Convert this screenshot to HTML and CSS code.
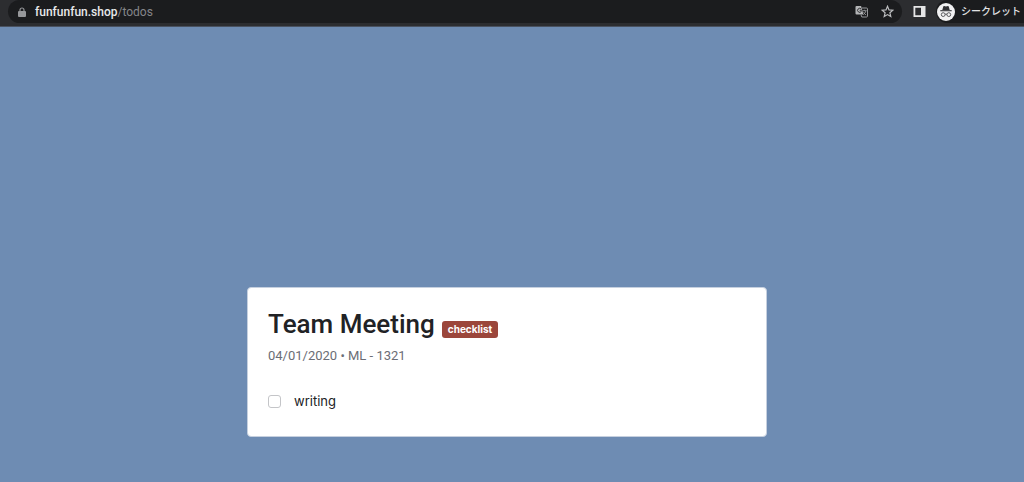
FILE: index.html
```html
<!DOCTYPE html>
<html lang="ja">
<head>
<meta charset="utf-8">
<title>Todos</title>
<link rel="stylesheet" href="styles.css">
</head>
<body>
<header class="toolbar">
  <div class="omnibox">
    <svg class="lock" viewBox="0 0 8 10" aria-hidden="true"><rect y="4" width="8" height="6" rx="1" fill="currentColor"/><path d="M2 4.5V3a2 2 0 0 1 4 0v1.5" fill="none" stroke="currentColor" stroke-width="1.2"/></svg>
    <a class="url" href="#"><span class="host">funfunfun.shop</span><span class="path">/todos</span></a>
    <button class="icon-button" type="button" aria-label="翻訳">
      <svg class="icon" viewBox="0 0 13 13" aria-hidden="true">
        <path d="M1.500 1h4.600l2.300 8.600H1.500a1 1 0 0 1-1-1V2a1 1 0 0 1 1-1z" fill="#b4b5b7"/>
        <path d="M6.200 4.100A2 2 0 1 0 6.300 6.400V5.300H4.700" fill="none" stroke="#303134" stroke-width="1"/>
        <path d="M7 3h4.500a1 1 0 0 1 1 1v7a1 1 0 0 1-1 1H6.800L6 9.800" fill="none" stroke="#96979a" stroke-width="1"/>
        <path d="M7.500 5.700h4M9.500 4.800v.9M11 5.700c-.4 1.800-1.400 3-2.700 4M8.600 7.200c.5 1.200 1.300 2.100 2.500 2.800" fill="none" stroke="#96979a" stroke-width=".9"/>
      </svg>
    </button>
    <button class="icon-button" type="button" aria-label="ブックマーク">
      <svg class="icon" viewBox="0 0 13 13" aria-hidden="true"><path d="M6.500 1.300l1.500 3.600 3.900.3-3 2.600.9 3.800-3.300-2-3.300 2 .9-3.800-3-2.600 3.900-.3z" fill="none" stroke="#bdbec0" stroke-width="1.200" stroke-linejoin="miter"/></svg>
    </button>
  </div>
  <button class="icon-button panel-button" type="button" aria-label="サイドパネル">
    <svg class="icon" viewBox="0 0 13 13" aria-hidden="true"><path fill-rule="evenodd" d="M.5 1h12v11H.5zM2.300 2.700v7.600h5.700V2.700z" fill="#e6e6e7"/></svg>
  </button>
  <button class="profile" type="button">
    <svg class="avatar" viewBox="0 0 18 18" aria-hidden="true">
      <circle cx="9" cy="9" r="9" fill="#f1f1f2"/>
      <path d="M5.300 7l1-3.500q.2-.6.800-.4l1.900.4 1.900-.4q.6-.2.800.4l1 3.500z" fill="#303134"/>
      <path d="M3.300 7.700h11.400" stroke="#303134" stroke-width="1.100"/>
      <g fill="none" stroke="#4a4b4e" stroke-width=".9"><circle cx="6.200" cy="11.600" r="1.900"/><circle cx="11.800" cy="11.600" r="1.900"/><path d="M8.100 11.300q.9-.6 1.800 0"/></g>
    </svg>
    <span>シークレット</span>
  </button>
</header>
<main class="page">
  <section class="card">
    <div class="heading">
      <h1 class="title">Team Meeting</h1>
      <span class="badge">checklist</span>
    </div>
    <p class="meta">04/01/2020 • ML - 1321</p>
    <label class="todo"><input class="check" type="checkbox"><span>writing</span></label>
  </section>
</main>
</body>
</html>
```
FILE: styles.css
```css
* {
  box-sizing: border-box;
}

body {
  display: flex;
  flex-direction: column;
  min-height: 100vh;
  margin: 0;
  background: #6e8cb3;
  color: #212225;
  font-family: Roboto, "Noto Sans CJK JP", sans-serif;
}

button {
  border: 0;
  padding: 0;
  background: none;
  color: inherit;
  font: inherit;
}

.toolbar {
  display: flex;
  align-items: stretch;
  height: 27px;
  padding: 0 0 3px 8px;
  background: #2c2d30;
  border-bottom: 1px solid #4a5260;
  overflow: hidden;
}

.omnibox {
  display: flex;
  flex: 1;
  align-items: center;
  gap: 13px;
  padding: 0 8px 0 10px;
  border-radius: 12px;
  background: #1b1c1e;
}

.lock {
  width: 8px;
  height: 10px;
  color: #97989b;
}

.url {
  flex: 1;
  margin-left: -4px;
  font-size: 12px;
  line-height: 16px;
  text-decoration: none;
}

.host {
  color: #e8e9eb;
  font-weight: 500;
}

.path {
  color: #85868a;
}

.icon-button {
  display: flex;
}

.icon {
  width: 13px;
  height: 13px;
}

.panel-button {
  align-items: center;
  margin: 0 10px 0 11px;
}

.profile {
  display: flex;
  align-items: center;
  gap: 6px;
  padding: 0 3px 0 1px;
  border-radius: 12px 0 0 12px;
  background: #1b1c1e;
  color: #e2e3e5;
  font-size: 10px;
  font-weight: 500;
  line-height: 16px;
  white-space: nowrap;
}

.avatar {
  width: 18px;
  height: 18px;
}

.page {
  display: flex;
  flex: 1;
  flex-direction: column;
  align-items: center;
  justify-content: flex-end;
  padding: 24px 10px 45px 0;
}

.card {
  width: 100%;
  max-width: 520px;
  padding: 20px 20px 25px;
  border: 1px solid #c6d0df;
  border-radius: 4px;
  background: #fff;
}

.heading {
  display: flex;
  align-items: flex-end;
  gap: 7px;
}

.title {
  margin: 0;
  font-size: 26px;
  font-weight: 500;
  line-height: 32px;
}

.badge {
  margin-bottom: 2px;
  padding: 0 6px;
  border-radius: 3px;
  background: #9b463b;
  color: #fff;
  font-family: Inter, sans-serif;
  font-size: 10px;
  font-weight: 700;
  line-height: 17px;
}

.meta {
  margin: 6px 0 25px;
  color: #6b6d75;
  font-size: 13px;
  line-height: 20px;
}

.todo {
  display: flex;
  align-items: center;
  gap: 13px;
  width: fit-content;
  font-family: Inter, sans-serif;
  font-size: 13px;
  line-height: 20px;
}

.check {
  width: 13px;
  height: 13px;
  margin: 0;
  appearance: none;
  border: 1px solid #c4c5c8;
  border-radius: 3px;
  background: #fff;
}

.check:checked {
  background: #6e8cb3;
}
```
